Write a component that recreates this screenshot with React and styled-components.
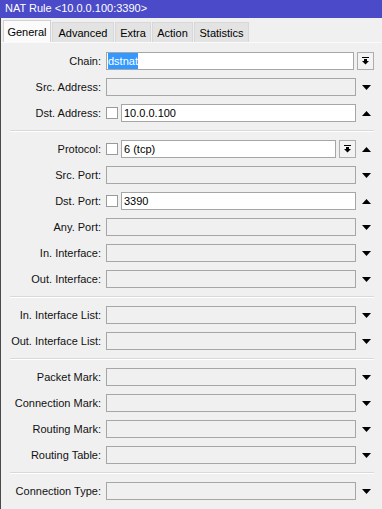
import React from 'react';
import styled, { createGlobalStyle } from 'styled-components';

const GlobalStyle = createGlobalStyle`
  html, body {
    margin: 0;
    padding: 0;
    background: #f0f0f0;
  }
  body {
    font-family: "Liberation Sans", Arial, sans-serif;
    font-size: 11px;
    color: #000000;
  }
`;

const Window = styled.div`
  width: 382px;
  height: 509px;
  overflow: hidden;
  display: flex;
  flex-direction: column;
  background: #f0f0f0;
`;

const TitleBar = styled.div`
  flex-shrink: 0;
  height: 18px;
  line-height: 17px;
  padding-left: 5px;
  background: #4b4bc9;
  color: #ffffff;
  font-size: 11px;
  white-space: nowrap;
`;

const Body = styled.div`
  flex: 1;
  display: flex;
  flex-direction: column;
  border-left: 1px solid #4a4a4a;
`;

const TabStrip = styled.div`
  display: flex;
  align-items: flex-end;
  height: 24px;
  padding-left: 2px;
`;

const Tab = styled.div`
  box-sizing: border-box;
  width: ${props => props.width}px;
  height: ${props => (props.active ? 22 : 20)}px;
  line-height: ${props => (props.active ? 22 : 20)}px;
  text-align: center;
  border: 1px solid ${props => (props.active ? '#d2d2d2' : '#d8d8d8')};
  border-bottom: none;
  background: ${props => (props.active ? '#fbfbfb' : '#e3e3e3')};
  margin-right: 1px;
`;

const Panel = styled.div`
  flex: 1;
  border-top: 1px solid #fafafa;
  padding-top: 9px;
`;

const Section = styled.div`
  display: flex;
  flex-direction: column;
  gap: 8px;
`;

const Separator = styled.div`
  height: 0;
  margin: 8px 8px 8px 9px;
  border-top: 1px solid #d9d9d9;
  border-bottom: 1px solid #ffffff;
`;

const Row = styled.div`
  display: grid;
  grid-template-columns: 105px 250px 21px;
  height: 18px;
  align-items: center;
`;

const Label = styled.div`
  text-align: right;
  padding-right: 5px;
  white-space: nowrap;
  line-height: 18px;
  color: #111111;
`;

const Field = styled.div`
  display: flex;
  align-items: center;
  gap: 3px;
  height: 18px;
  grid-column: ${props => (props.wide ? '2 / 4' : 'auto')};
  margin-right: ${props => (props.wide ? 3 : 0)}px;
`;

const Box = styled.div`
  flex: 1;
  box-sizing: border-box;
  height: 18px;
  line-height: 16px;
  padding-left: ${props => (props.tight ? 1 : 2)}px;
  border: 1px solid #a6a6a6;
  background: ${props => (props.enabled ? '#ffffff' : '#f0f0f0')};
  white-space: nowrap;
  overflow: hidden;
`;

const Selected = styled.span`
  display: inline-block;
  background: #3399ff;
  color: #ffffff;
`;

const Check = styled.div`
  box-sizing: border-box;
  width: 12px;
  height: 12px;
  flex-shrink: 0;
  border: 1px solid #9a9a9a;
  background: #ffffff;
`;

const DropButton = styled.div`
  box-sizing: border-box;
  width: 17px;
  height: 18px;
  flex-shrink: 0;
  border: 1px solid #adadad;
  background: #f3f3f3;
  display: flex;
  align-items: center;
  justify-content: center;
`;

const ArrowCell = styled.div`
  display: flex;
  align-items: center;
  justify-content: center;
  height: 18px;
`;

function Triangle({ up }) {
  return (
    <svg width="9" height="5" viewBox="0 0 9 5">
      <path d={up ? 'M0 5h9L4.5 0z' : 'M0 0h9L4.5 5z'} fill="#000" />
    </svg>
  );
}

function DropIcon() {
  return (
    <svg width="7" height="8" viewBox="0 0 7 8">
      <rect x="0" y="0" width="7" height="1" fill="#000" />
      <rect x="2" y="2" width="3" height="2" fill="#000" />
      <path d="M0 4h7L3.5 7.5z" fill="#000" />
    </svg>
  );
}

const tabs = [
  { name: 'General', width: 48, active: true },
  { name: 'Advanced', width: 62 },
  { name: 'Extra', width: 36 },
  { name: 'Action', width: 41 },
  { name: 'Statistics', width: 55 },
];

const sections = [
  [
    { label: 'Chain:', kind: 'chain', value: 'dstnat' },
    { label: 'Src. Address:' },
    { label: 'Dst. Address:', check: true, value: '10.0.0.100' },
  ],
  [
    { label: 'Protocol:', check: true, value: '6 (tcp)', button: true },
    { label: 'Src. Port:' },
    { label: 'Dst. Port:', check: true, value: '3390' },
    { label: 'Any. Port:' },
    { label: 'In. Interface:' },
    { label: 'Out. Interface:' },
  ],
  [
    { label: 'In. Interface List:' },
    { label: 'Out. Interface List:' },
  ],
  [
    { label: 'Packet Mark:' },
    { label: 'Connection Mark:' },
    { label: 'Routing Mark:' },
    { label: 'Routing Table:' },
  ],
  [{ label: 'Connection Type:' }],
];

function FieldRow({ item }) {
  if (item.kind === 'chain') {
    return (
      <Row>
        <Label>{item.label}</Label>
        <Field wide>
          <Box enabled tight>
            <Selected>{item.value}</Selected>
          </Box>
          <DropButton>
            <DropIcon />
          </DropButton>
        </Field>
      </Row>
    );
  }
  const enabled = Boolean(item.check);
  return (
    <Row>
      <Label>{item.label}</Label>
      <Field>
        {item.check && <Check />}
        <Box enabled={enabled}>{item.value}</Box>
        {item.button && (
          <DropButton>
            <DropIcon />
          </DropButton>
        )}
      </Field>
      <ArrowCell>
        <Triangle up={enabled} />
      </ArrowCell>
    </Row>
  );
}

export default function App() {
  return (
    <>
      <GlobalStyle />
      <Window>
        <TitleBar>NAT Rule &lt;10.0.0.100:3390&gt;</TitleBar>
        <Body>
          <TabStrip>
            {tabs.map(t => (
              <Tab key={t.name} width={t.width} active={t.active}>
                {t.name}
              </Tab>
            ))}
          </TabStrip>
          <Panel>
            {sections.map((rows, i) => (
              <React.Fragment key={i}>
                {i > 0 && <Separator />}
                <Section>
                  {rows.map(r => (
                    <FieldRow key={r.label} item={r} />
                  ))}
                </Section>
              </React.Fragment>
            ))}
          </Panel>
        </Body>
      </Window>
    </>
  );
}
